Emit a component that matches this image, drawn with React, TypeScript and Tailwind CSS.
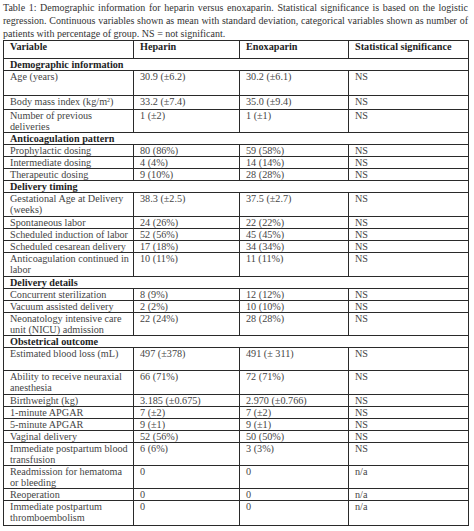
import type { ReactNode } from 'react'

type Row =
  | { kind: 'section'; label: string; h: number }
  | { kind: 'data'; label: ReactNode; heparin: string; enox: string; sig: string; h: number }

const rows: Row[] = [
  { kind: 'section', label: 'Demographic information', h: 12 },
  { kind: 'data', label: 'Age (years)', heparin: '30.9 (±6.2)', enox: '30.2 (±6.1)', sig: 'NS', h: 25 },
  {
    kind: 'data',
    label: (
      <>
        Body mass index (kg/m<sup className="text-[6px]">2</sup>)
      </>
    ),
    heparin: '33.2 (±7.4)',
    enox: '35.0 (±9.4)',
    sig: 'NS',
    h: 14,
  },
  { kind: 'data', label: <>Number of previous<br />deliveries</>, heparin: '1 (±2)', enox: '1 (±1)', sig: 'NS', h: 22 },
  { kind: 'section', label: 'Anticoagulation pattern', h: 12 },
  { kind: 'data', label: 'Prophylactic dosing', heparin: '80 (86%)', enox: '59 (58%)', sig: 'NS', h: 12 },
  { kind: 'data', label: 'Intermediate dosing', heparin: '4 (4%)', enox: '14 (14%)', sig: 'NS', h: 12 },
  { kind: 'data', label: 'Therapeutic dosing', heparin: '9 (10%)', enox: '28 (28%)', sig: 'NS', h: 12 },
  { kind: 'section', label: 'Delivery timing', h: 12 },
  { kind: 'data', label: <>Gestational Age at Delivery<br />(weeks)</>, heparin: '38.3 (±2.5)', enox: '37.5 (±2.7)', sig: 'NS', h: 24 },
  { kind: 'data', label: 'Spontaneous labor', heparin: '24 (26%)', enox: '22 (22%)', sig: 'NS', h: 12 },
  { kind: 'data', label: 'Scheduled induction of labor', heparin: '52 (56%)', enox: '45 (45%)', sig: 'NS', h: 12 },
  { kind: 'data', label: 'Scheduled cesarean delivery', heparin: '17 (18%)', enox: '34 (34%)', sig: 'NS', h: 12 },
  { kind: 'data', label: <>Anticoagulation continued in<br />labor</>, heparin: '10 (11%)', enox: '11 (11%)', sig: 'NS', h: 24 },
  { kind: 'section', label: 'Delivery details', h: 12 },
  { kind: 'data', label: 'Concurrent sterilization', heparin: '8 (9%)', enox: '12 (12%)', sig: 'NS', h: 12 },
  { kind: 'data', label: 'Vacuum assisted delivery', heparin: '2 (2%)', enox: '10 (10%)', sig: 'NS', h: 12 },
  { kind: 'data', label: <>Neonatology intensive care<br />unit (NICU) admission</>, heparin: '22 (24%)', enox: '28 (28%)', sig: 'NS', h: 23 },
  { kind: 'section', label: 'Obstetrical outcome', h: 12 },
  { kind: 'data', label: 'Estimated blood loss (mL)', heparin: '497 (±378)', enox: '491 (± 311)', sig: 'NS', h: 23 },
  { kind: 'data', label: <>Ability to receive neuraxial<br />anesthesia</>, heparin: '66 (71%)', enox: '72 (71%)', sig: 'NS', h: 24 },
  { kind: 'data', label: 'Birthweight (kg)', heparin: '3.185 (±0.675)', enox: '2.970 (±0.766)', sig: 'NS', h: 12 },
  { kind: 'data', label: '1-minute APGAR', heparin: '7 (±2)', enox: '7 (±2)', sig: 'NS', h: 12 },
  { kind: 'data', label: '5-minute APGAR', heparin: '9 (±1)', enox: '9 (±1)', sig: 'NS', h: 12 },
  { kind: 'data', label: 'Vaginal delivery', heparin: '52 (56%)', enox: '50 (50%)', sig: 'NS', h: 12 },
  { kind: 'data', label: <>Immediate postpartum blood<br />transfusion</>, heparin: '6 (6%)', enox: '3 (3%)', sig: 'NS', h: 23 },
  { kind: 'data', label: <>Readmission for hematoma<br />or bleeding</>, heparin: '0', enox: '0', sig: 'n/a', h: 23 },
  { kind: 'data', label: 'Reoperation', heparin: '0', enox: '0', sig: 'n/a', h: 12 },
  { kind: 'data', label: <>Immediate postpartum<br />thromboembolism</>, heparin: '0', enox: '0', sig: 'n/a', h: 25 },
]

const cell = 'border border-[#2a2a2a] pl-[6px] pr-[2px] pt-0 align-top'

export default function App() {
  return (
    <div className="h-[531px] w-[474px] bg-white font-['Liberation_Serif','Times_New_Roman',serif] text-[#454545]">
      {/* Caption, justified like the Word original */}
      <p className="ml-[3px] w-[465px] pt-px text-justify text-[10px] leading-[13px] text-[#333]">
        Table 1: Demographic information for heparin versus enoxaparin. Statistical significance is based on the logistic
        regression. Continuous variables shown as mean with standard deviation, categorical variables shown as number of
        patients with percentage of group. NS = not significant.
      </p>

      <table className="ml-[3px] w-[465px] table-fixed border-collapse text-[10.2px] leading-[11px]">
        <colgroup>
          <col className="w-[130px]" />
          <col className="w-[106px]" />
          <col className="w-[109px]" />
          <col className="w-[120px]" />
        </colgroup>
        <thead>
          <tr>
            {['Variable', 'Heparin', 'Enoxaparin', 'Statistical significance'].map((t) => (
              <th key={t} className={`${cell} h-[18px] text-left font-bold text-[#1e1e1e]`}>
                {t}
              </th>
            ))}
          </tr>
        </thead>
        <tbody>
          {rows.map((r, i) =>
            r.kind === 'section' ? (
              <tr key={i} style={{ height: r.h }}>
                <td colSpan={4} className={`${cell} font-bold text-[#1e1e1e]`}>
                  {r.label}
                </td>
              </tr>
            ) : (
              <tr key={i} style={{ height: r.h }}>
                <td className={`${cell} whitespace-nowrap`}>{r.label}</td>
                <td className={cell}>{r.heparin}</td>
                <td className={cell}>{r.enox}</td>
                <td className={cell}>{r.sig}</td>
              </tr>
            )
          )}
        </tbody>
      </table>
    </div>
  )
}
